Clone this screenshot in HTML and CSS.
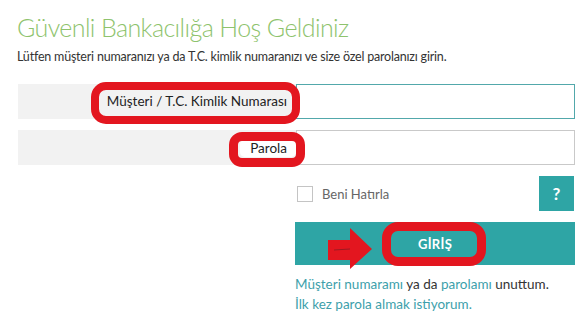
FILE: index.html
```html
<!DOCTYPE html>
<html lang="tr">
<head>
<meta charset="utf-8">
<title>Güvenli Bankacılık</title>
<link rel="stylesheet" href="styles.css">
</head>
<body>
<div class="page">
  <h1 class="title">Güvenli Bankacılığa Hoş Geldiniz</h1>
  <p class="intro">Lütfen müşteri numaranızı ya da T.C. kimlik numaranızı ve size özel parolanızı girin.</p>

  <form class="login">
    <label class="field-label" for="cust">Müşteri / T.C. Kimlik Numarası</label>
    <input class="field-input field-input--active" id="cust" type="text">

    <label class="field-label field-label--pill" for="pass"><span class="pill">Parola</span></label>
    <input class="field-input" id="pass" type="password">

    <div class="right-col">
      <div class="remember-row">
        <label class="remember"><span class="checkbox"></span>Beni Hatırla</label>
        <span class="help">?</span>
      </div>
      <button class="submit" type="button">GİRİŞ</button>
      <div class="links">
        <p><a class="link">Müşteri numaramı</a> ya da <a class="link">parolamı</a> unuttum.</p>
        <p><a class="link">İlk kez parola almak istiyorum.</a></p>
      </div>
    </div>
  </form>

  <div class="mark mark--customer"></div>
  <div class="mark mark--password"></div>
  <div class="mark mark--submit"></div>
  <svg class="arrow" width="48" height="44" viewBox="0 0 48 44">
    <polygon points="0,12 22,12 22,0 44,21 22,41 22,32 0,32" fill="#e3161f"/>
    <line x1="6" y1="22" x2="22" y2="21" stroke="#9c1a22" stroke-width="1"/>
  </svg>
</div>
</body>
</html>
```

FILE: styles.css
```css
* { box-sizing: border-box; }

html, body {
  margin: 0;
  padding: 0;
  background: #ffffff;
}

body {
  font-family: "Lato", "Open Sans", sans-serif;
  color: #333;
}

.page {
  position: relative;
  width: 588px;
  height: 322px;
  padding: 9px 13px 0 17px;
}

.title {
  margin: 0;
  font-size: 25px;
  font-weight: 300;
  line-height: 36px;
  color: #8ec36d;
  letter-spacing: -0.6px;
}

.intro {
  margin: 3px 0 0;
  font-size: 12.5px;
  line-height: 18px;
  color: #333;
  letter-spacing: -0.2px;
}

.login {
  display: grid;
  grid-template-columns: 278px 279px;
  grid-auto-rows: auto;
  row-gap: 11px;
  margin: 18px 0 0 1px;
}

.field-label {
  height: 35px;
  background: #f2f2f2;
  font-size: 13.5px;
  line-height: 35px;
  text-align: right;
  padding-right: 9px;
  color: #222;
}

.field-label--pill {
  display: flex;
  align-items: center;
  justify-content: flex-end;
  padding-right: 0;
}

.pill {
  height: 18px;
  line-height: 18px;
  padding: 0 9px 0 10px;
  background: #fff;
  border-radius: 5px;
}

.field-input {
  height: 35px;
  margin: 0;
  border: 1px solid #c9c9c9;
  background: #fff;
  font: inherit;
  outline: none;
}

.field-input--active {
  border-color: #52a8ab;
}

.right-col {
  grid-column: 2;
  display: flex;
  flex-direction: column;
  margin-left: -1px;
}

.remember-row {
  display: flex;
  align-items: center;
  justify-content: space-between;
  height: 35px;
}

.remember {
  display: flex;
  align-items: center;
  font-size: 13px;
  color: #666;
  padding-left: 2px;
}

.checkbox {
  width: 16px;
  height: 16px;
  border: 1px solid #c4c4c4;
  margin-right: 9px;
  background: #fff;
}

.help {
  width: 35px;
  height: 35px;
  margin-right: 1px;
  background: #2ea5a5;
  color: #fff;
  font-weight: 700;
  font-size: 17px;
  line-height: 35px;
  text-align: center;
}

.submit {
  margin-top: 11px;
  height: 43px;
  width: 280px;
  border: none;
  background: #2ea5a5;
  color: #fff;
  font-family: inherit;
  font-weight: 700;
  font-size: 13px;
  letter-spacing: 0.3px;
  padding: 0;
}

.links {
  margin-top: 9px;
  font-size: 13.5px;
  line-height: 20px;
  color: #333;
}

.links p { margin: 0; }

.link {
  color: #3d9fab;
  text-decoration: none;
}

/* annotation overlays */
.mark {
  position: absolute;
  border: 8px solid #e3161f;
  border-radius: 15px;
}

.mark--customer {
  left: 91px;
  top: 82px;
  width: 209px;
  height: 42px;
}

.mark--password {
  left: 229px;
  top: 132px;
  width: 76px;
  height: 35px;
  border-width: 9px;
  border-radius: 13px;
}

.mark--submit {
  left: 382px;
  top: 222px;
  width: 104px;
  height: 44px;
  border-width: 9px;
  border-radius: 16px;
}

.arrow {
  position: absolute;
  left: 328px;
  top: 228px;
}
```
